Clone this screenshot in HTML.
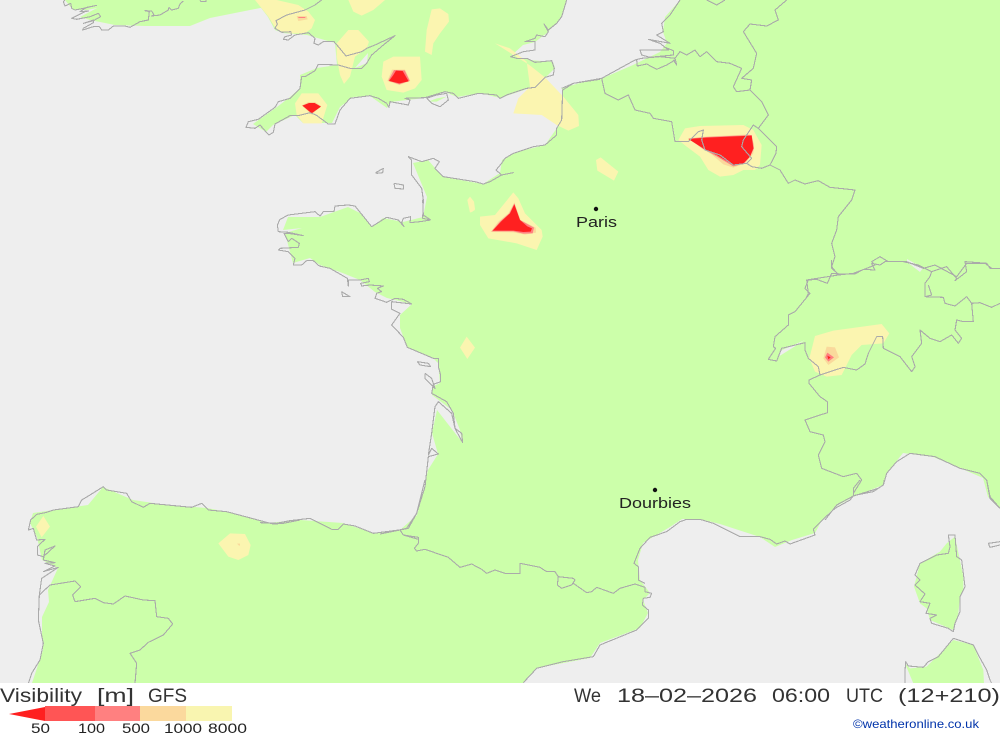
<!DOCTYPE html>
<html><head><meta charset="utf-8"><title>Visibility GFS</title>
<style>
html,body{margin:0;padding:0;background:#fff;width:1000px;height:733px;overflow:hidden}
svg{display:block;position:absolute;left:0;top:0}
.c{fill:none;stroke:#aaa;stroke-width:3.3;stroke-linejoin:round;shape-rendering:crispEdges}
.y{fill:#fbf5b0}.o{fill:#fad99c}.p{fill:#ff8080}.r{fill:#ff2020}
text{font-family:"Liberation Sans",sans-serif}
</style></head><body>
<svg width="1000" height="733" viewBox="0 0 1000 733">
<rect width="1000" height="733" fill="#fff"/>
<svg x="0" y="0" width="1000" height="683" viewBox="0 0 1000 683">
<rect width="1000" height="683" fill="#ccffaa"/>
<polygon fill="#eee" points="0,0 255,0 268,17 275,30 283,33 307,35 335,43 337,65 317,68 300,75 300,88 290,97 277,107 253,124 266,132 273,125 295,115 303,123 322,123 332,123 340,107 353,97 370,96 387,108 390,102 407,100 425,98 445,92 457,97 480,93 500,98 527,89 545,78 555,68 553,62 530,60 512,55 523,45 535,42 547,33 562,17 567,0 680,0 665,17 663,32 667,43 660,52 633,65 603,78 580,83 562,88 562,120 557,128 545,145 513,153 502,160 500,173 483,184 443,177 428,160 413,163 427,197 423,217 403,222 383,218 372,227 360,213 348,207 320,217 288,217 283,230 302,228 285,233 293,263 310,258 320,265 340,272 360,280 375,292 387,298 412,304 400,315 400,328 407,347 433,358 438,363 440,383 432,387 432,395 452,410 460,430 462,442 437,410 432,433 438,454 428,470 423,493 417,515 400,530 373,533 343,523 300,520 267,523 227,512 207,508 167,505 133,500 103,487 88,505 33,513 30,523 37,537 42,560 58,568 48,590 49,602 42,617 42,637 43,650 32,683 0,683"/>
<polygon fill="#eee" points="523,683 537,668 590,658 600,643 640,628 648,613 643,600 650,593 640,580 638,560 643,543 653,537 670,527 682,519 700,519 720,524 760,537 775,547 792,540 815,533 822,520 835,507 853,497 883,485 887,473 903,453 933,457 960,468 983,478 988,497 1000,508 1000,683"/>
<polygon fill="#eee" points="780,351 805,340 797,345 778,357"/>
<polygon fill="#eee" points="907,259 923,268 920,272 907,262"/>
<polygon fill="#eee" points="355,68 368,53 367,63"/>
<polygon fill="#ccffaa" points="65,0 73,10 87,10 97,8 80,17 90,20 115,25 118,25 145,26 190,26 210,18 250,10 300,0"/>
<g transform="translate(760,480) scale(.33333)">
<polygon fill="#ccffaa" points="560,190 585,170 610,290 610,330 600,350 595,400 580,450 510,420 500,385 480,370 462,320 480,250 540,215"/>
<polygon fill="#ccffaa" points="435,550 450,565 500,560 550,510 580,480 640,495 670,570 672,610 460,610"/>
</g>
<g transform="translate(240,0) scale(.33333)">
<polygon fill="#ccffaa" points="565,305 590,295 620,290 590,305"/>
<polygon class="y" points="45,0 110,0 175,15 205,35 225,60 215,85 195,100 150,100 110,90 85,50"/>
<polygon class="o" points="170,48 200,48 203,58 175,63"/>
<polygon class="p" points="175,51 196,51 196,54 175,54"/>
<polygon class="y" points="325,0 435,0 400,30 365,47 340,35"/>
<polygon class="y" points="575,28 600,25 625,42 627,65 600,100 580,130 575,165 555,155 560,90"/>
<polygon class="y" points="290,130 325,90 355,90 387,125 380,145 345,170 330,230 312,252 300,225 290,170"/>
<polygon class="y" points="430,185 460,170 540,170 545,240 525,265 490,278 440,270 425,230"/>
<polygon class="o" points="456,209 495,209 511,243 478,255 442,243"/>
<polygon class="p" points="462,210 494,211 509,242 478,253 445,242"/>
<polygon class="r" points="468,212 488,213 506,244 478,250 447,243 460,225"/>
<polygon class="y" points="165,310 185,280 235,280 262,315 245,370 190,370 170,345"/>
<polygon class="o" points="185,316 205,306 225,306 243,318 215,344"/>
<polygon class="r" points="187,317 207,309 224,309 243,320 215,340"/>
<polygon class="y" points="765,130 810,145 860,185 870,260 835,295 820,340 905,345 950,375 985,392 1017,378 1015,345 970,290 915,232 868,195"/>
<polygon class="y" points="690,590 705,630 690,638 682,600"/>
</g>
<g transform="translate(470,185) scale(.33333)">
<polygon class="y" points="130,22 145,40 165,85 215,135 218,155 200,195 140,175 55,160 30,120 30,95 75,90"/>
<polygon class="o" points="133,52 152,105 197,128 198,143 165,149 130,142 62,141 85,110 115,85"/>
<polygon class="p" points="133,55 150,105 192,128 188,145 160,146 130,139 65,139 90,110 118,85"/>
<polygon class="r" points="133,58 150,105 172,124 186,130 182,140 160,141 130,137 68,137 95,108 120,85"/>
<polygon class="y" points="0,35 12,50 15,72 5,82 0,70"/>
</g>
<g transform="translate(670,115) scale(.33333)">
<polygon class="y" points="45,40 90,33 220,30 250,45 275,90 270,150 255,165 220,165 190,180 150,185 115,165 90,125 50,95 25,75"/>
<polygon class="o" points="55,70 105,65 240,58 252,85 250,115 225,145 190,158 160,148 125,118 95,100 70,80"/>
<polygon class="p" points="55,71 108,66 245,60 252,100 240,125 222,146 190,154 140,124 100,102"/>
<polygon class="r" points="55,72 110,68 245,62 250,100 240,125 220,145 190,150 140,120 100,100"/>
</g>
<g transform="translate(560,0) scale(.33333)">
<polygon class="y" points="122,472 175,515 162,542 112,512 108,480"/>
</g>
<g transform="translate(740,260) scale(.33333)">
<polygon class="y" points="225,228 280,212 425,192 448,220 430,250 365,255 335,285 305,345 260,350 225,335 208,295"/>
<polygon class="o" points="260,260 285,262 297,292 265,315 250,295"/>
<polygon class="p" points="262,278 282,292 265,305 255,292"/>
<polygon class="r" points="262,287 272,292 265,298"/>
</g>
<g transform="translate(260,200) scale(.33333)">
<polygon class="y" points="620,410 645,443 622,477 600,443"/>
</g>
<g transform="translate(0,480) scale(.33333)">
<polygon class="y" points="130,108 150,140 125,172 108,140"/>
<polygon class="y" points="690,160 735,162 752,195 745,225 715,240 685,230 655,190"/>
<polygon class="o" points="711,191 720,191 720,197 717,197"/>
</g>
<!-- coast lines -->
<g transform="translate(50,0) scale(.33333)">
<polyline class="c" points="45,0 40,5 45,18 62,10 65,25 75,30 100,25 140,16 110,22 90,35 115,33 105,35 65,55 80,58 120,50 145,40 152,50 130,62 100,70 130,60 130,68 100,85 98,90 130,80 148,80 155,90 175,90 190,78 225,78 240,82 270,65 295,60 298,35 285,32 305,33 312,45 305,48 330,45 355,30 357,22 365,30 385,25 390,12 400,3"/>
<polyline class="c" points="450,0 452,4 468,4 468,0"/>
</g>
<g transform="translate(240,0) scale(.33333)">
<polyline class="c" points="245,0 225,15 195,30 140,45 108,62 112,72 105,85 125,97 152,95 155,105 135,110 130,118 145,120 165,105 205,98 225,115 222,130 235,135 250,125 282,125 295,140 318,168 365,155 380,145 405,135 465,107 430,135 395,165 380,190 365,205 330,205 295,195 235,193 225,212 195,230 185,230 180,265 150,295 115,305 105,322 55,358 25,365 18,382 45,385 60,375 80,398 87,405 100,397 105,372 150,347 175,347 210,338 228,345 265,372 285,372 300,330 330,295 390,287 415,295 440,310 447,322 450,305 505,315 510,300 495,295 555,293 615,275 640,280 655,295 715,280 770,285 780,295 800,285 860,265 885,262 915,232 940,225 943,205 935,182 885,187 860,175 830,175 812,170 850,155 885,150 885,125 855,125 885,115 890,105 915,110 925,95 912,72 925,90 950,70 965,50 980,0"/>
<polyline class="c" points="560,295 590,285 620,280 625,300 600,320 575,310 560,295"/>
<polyline class="c" points="1080,238 1000,250 968,270 965,360 950,385 950,405 915,435 880,440 820,460 795,475 785,490 768,510 785,525 820,518 785,525 750,545 730,552 705,545 610,530 585,505 598,485 580,475 545,485 505,470 515,480 515,525 545,565 550,600 548,655 572,660"/>
<polyline class="c" points="407,518 430,505 428,518 410,520 407,518"/>
<polyline class="c" points="462,550 490,555 490,567 465,565 462,550"/>
</g>
<g transform="translate(260,200) scale(.33333)">
<polyline class="c" points="512,60 490,45 488,0"/>
<polyline class="c" points="512,60 480,65 450,68 452,50 430,55 425,68 432,80 415,60 380,52 335,80 285,18 265,15 225,18 222,35 190,35 180,48 165,35 85,45 60,58 52,75 55,95 85,97 130,107 85,100 72,100 85,125 95,115 118,130 115,142 60,145 55,150 85,155 105,175 100,195 125,195 140,182 160,182 178,198 210,205 262,235 265,258 265,240 300,240 325,235 328,245 302,250 305,258 330,255 370,258 352,265 365,275 350,280 345,295 380,307 405,295 430,298 455,312 395,305 395,328 420,340 395,375 430,412 442,442 520,475 535,475 535,500 542,525 542,545 520,553 515,580 560,605 580,640 585,685 605,700 608,728 585,685 575,640 535,605 525,620 515,700 505,765 515,745 535,762 505,770 495,860 470,940 440,985 417,990 340,1000 285,978 250,972 235,988 215,988 150,955 90,962 50,970 0,968"/>
<polyline class="c" points="420,990 430,1005 475,1018"/>
<polyline class="c" points="472,485 505,490 512,500 480,495 472,485"/>
<polyline class="c" points="245,275 270,290 248,290 245,275"/>
<polyline class="c" points="495,520 515,535 525,565 510,550 495,535 495,520"/>
</g>
<g transform="translate(560,0) scale(.33333)">
<polyline class="c" points="5,265 40,250 125,235 225,180 245,175 300,170 345,175 350,195 340,180"/>
<polyline class="c" points="360,0 330,45 305,70 310,95 290,105 330,130 265,118 300,130 325,150 240,150 245,165 270,172 340,165 340,152 310,140"/>
<polyline class="c" points="230,180 232,198 260,192 290,208 320,195 345,180"/>
<polyline class="c" points="125,235 135,280 175,300 205,285 225,330 270,340 280,355 335,365 345,425 385,425 415,395 430,390 425,420 435,450 480,465 520,495 560,490 575,500 605,505 630,495 660,510 685,550 705,540 735,552 775,542 810,562 885,570 875,600 835,650 830,690 815,730 825,770 815,800 835,825 880,820 920,805 945,795 935,785 960,770 985,785 1040,785 1090,805 1125,795 1190,830 1220,790 1275,790 1295,805 1320,805"/>
<polyline class="c" points="595,385 625,345 605,305 570,270 530,275 520,260 545,205 510,190 470,185 440,155 420,170 405,150 380,165 360,155 345,175"/>
<polyline class="c" points="570,270 575,240 545,235 580,205 590,160 550,95 570,72 620,78 655,60 645,30 680,0"/>
<polyline class="c" points="595,385 650,440 648,460 630,495"/>
<polyline class="c" points="595,385 580,375 550,420 545,440 575,475 560,490"/>
<polyline class="c" points="440,0 470,15 495,0"/>
<polyline class="c" points="835,825 740,840 745,880 735,900"/>
</g>
<g transform="translate(740,260) scale(.33333)">
<polyline class="c" points="275,0 275,25 295,42 345,42 370,28 405,30 395,10 420,15 435,5 490,5 535,15 575,35 570,50 555,70 555,110 610,112 615,130 645,138 680,110 695,130 700,185 670,185 650,180 645,210 665,235 655,250 635,225 600,245 570,235 540,210 545,250 515,290 525,320 515,335 480,290 430,265 428,230 410,230 385,280 375,312 350,330 310,322 240,345 207,360 207,370 240,410 262,425 262,458 195,480 210,515 250,525 255,545 235,585 245,625 310,650 350,640 365,660 340,700 340,708"/>
<polyline class="c" points="295,42 275,40 262,70 230,58 205,60 195,85 210,100 165,155 145,165 145,195 105,230 100,260 107,265 85,298 110,303 125,265 195,248 195,270 205,295 235,320 240,345"/>
<polyline class="c" points="340,708 415,685 430,675 440,640 470,605 510,580 585,590 660,625 720,640 740,660 750,715 780,745"/>
<polyline class="c" points="340,708 290,735 255,780"/>
<polyline class="c" points="575,35 620,20 650,55 645,62 680,35 675,5 740,10 750,25 780,25"/>
<polyline class="c" points="555,110 575,105 565,75"/>
<polyline class="c" points="695,130 720,128 755,142 780,130"/>
</g>
<g transform="translate(0,480) scale(.33333)">
<polyline class="c" points="900,120 850,130 820,132 800,127 680,95 625,90 605,70 575,82 450,70 430,82 395,65 380,40 320,30 310,20 270,45 245,60 235,80 160,90 140,97 110,103 92,120 85,150 100,145 110,180 135,178 112,200 112,225 130,230 165,198 135,210 130,240 165,248 135,250 165,258 130,275 175,262 125,295 118,345 115,420 130,490 120,540 95,580 85,610"/>
<polyline class="c" points="118,345 150,315 225,303 242,320 218,345 225,365 285,355 310,368 340,372 375,348 430,360 465,362 470,410 505,415 518,432 490,465 445,487 420,510 390,520 410,550 405,610"/>
</g>
<g transform="translate(380,480) scale(.33333)">
<polyline class="c" points="135,0 110,100 85,145 60,150 0,162"/>
<polyline class="c" points="60,150 70,165 115,172 115,190 103,205 110,213 135,208 205,232 240,262 275,252 305,268 320,280 345,270 375,280 420,280 420,250 480,262 500,275 525,275 535,290 580,295 585,300 575,315 545,325 532,315 535,290"/>
<polyline class="c" points="580,310 620,338 635,335 650,322 700,340 720,325 765,312 795,322 795,335 815,340 810,352 790,355 787,375 805,390 805,415 770,450 660,495 640,530 550,545 470,565 430,608"/>
<polyline class="c" points="795,310 775,300 775,260 762,250 780,205 810,172 860,155 900,125 920,118 960,118 1000,130 1040,150 1080,170 1140,170"/>
</g>
<g transform="translate(760,480) scale(.33333)">
<polyline class="c" points="0,170 30,178 50,192 75,183 90,192 165,165 160,148 185,122 225,85 270,60 280,47 340,35 370,15 373,0"/>
<polyline class="c" points="280,47 280,25 300,0"/>
<polyline class="c" points="680,0 690,50 720,85"/>
<polyline class="c" points="570,165 585,165 590,230 605,240 615,320 600,350 600,395 585,430 580,455 565,445 515,430 510,415 530,405 498,400 510,370 480,365 495,342 465,315 480,300 465,285 480,250 530,225 565,220 570,200 565,165 570,165"/>
<polyline class="c" points="435,610 435,575 437,545 445,558 490,562 505,545 535,530 580,475 640,495 655,525 680,570 690,600 695,610"/>
<polyline class="c" points="720,185 685,190 690,202 720,195"/>
</g>
<circle cx="596" cy="209" r="2.2" fill="#111"/>
<circle cx="655" cy="490" r="2.2" fill="#111"/>
<text x="576" y="227" font-size="15" fill="#222" textLength="41" lengthAdjust="spacingAndGlyphs">Paris</text>
<text x="619" y="508" font-size="15" fill="#222" textLength="72" lengthAdjust="spacingAndGlyphs">Dourbies</text>
</svg>
<g font-size="19" fill="#333">
<text x="0" y="702" textLength="82" lengthAdjust="spacingAndGlyphs">Visibility</text>
<text x="97" y="702" textLength="37" lengthAdjust="spacingAndGlyphs">[m]</text>
<text x="148" y="702" textLength="39" lengthAdjust="spacingAndGlyphs">GFS</text>
<text x="574" y="702" textLength="27" lengthAdjust="spacingAndGlyphs">We</text>
<text x="617" y="702" textLength="140" lengthAdjust="spacingAndGlyphs">18–02–2026</text>
<text x="772" y="702" textLength="58" lengthAdjust="spacingAndGlyphs">06:00</text>
<text x="846" y="702" textLength="37" lengthAdjust="spacingAndGlyphs">UTC</text>
<text x="898" y="702" textLength="102" lengthAdjust="spacingAndGlyphs">(12+210)</text>
</g>
<polygon points="9,714 45,707 45,721" fill="#ff2020"/>
<rect x="45" y="706" width="50" height="15" fill="#ff5555"/>
<rect x="95" y="706" width="45" height="15" fill="#ff8080"/>
<rect x="140" y="706" width="46" height="15" fill="#fbd99d"/>
<rect x="186" y="706" width="46" height="15" fill="#f9f5b0"/>
<g font-size="14" fill="#222">
<text x="31" y="733" textLength="19" lengthAdjust="spacingAndGlyphs">50</text>
<text x="78" y="733" textLength="27" lengthAdjust="spacingAndGlyphs">100</text>
<text x="122" y="733" textLength="28" lengthAdjust="spacingAndGlyphs">500</text>
<text x="164" y="733" textLength="38" lengthAdjust="spacingAndGlyphs">1000</text>
<text x="208" y="733" textLength="39" lengthAdjust="spacingAndGlyphs">8000</text>
</g>
<text x="853" y="728" font-size="12" fill="#0033aa" textLength="126" lengthAdjust="spacingAndGlyphs">©weatheronline.co.uk</text>
</svg>
</body></html>
